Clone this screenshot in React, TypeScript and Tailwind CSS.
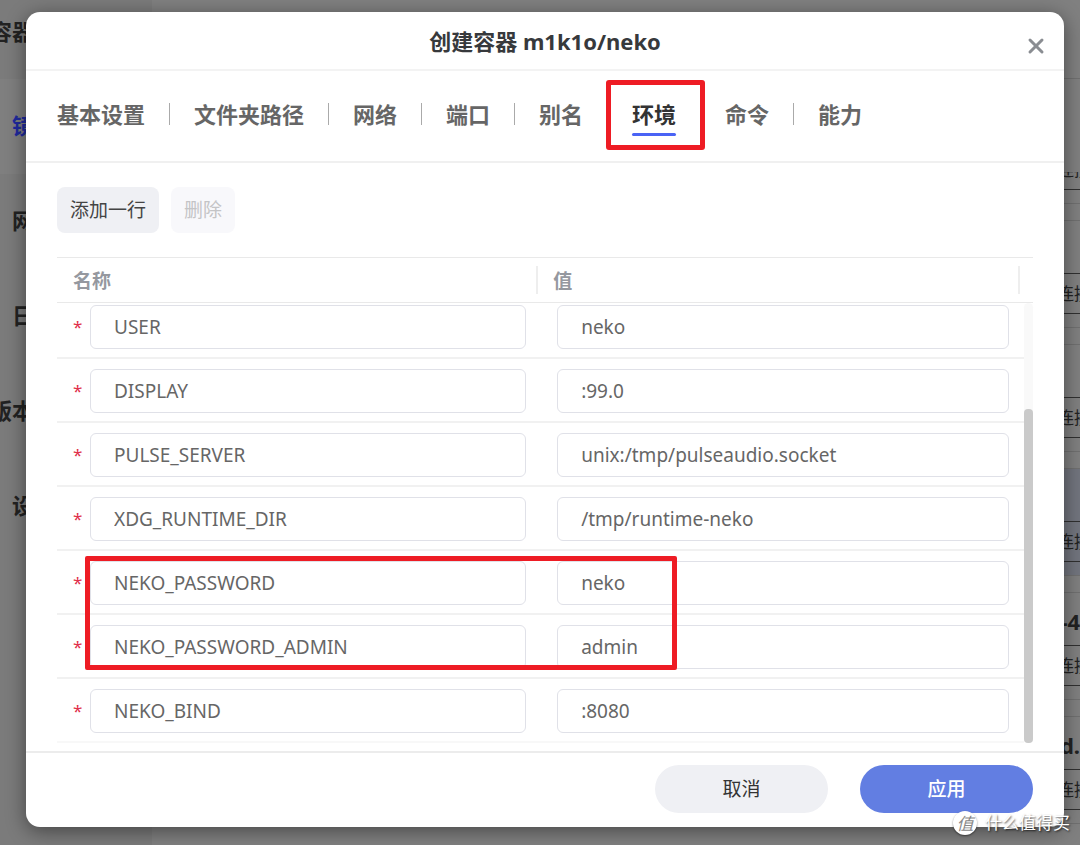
import { FC, useState } from 'react'
import { X } from 'lucide-react'
import clsx from 'clsx'

type Variable = { name: string; value: string }

const TABS = [
  '基本设置',
  '文件夹路径',
  '网络',
  '端口',
  '别名',
  '环境',
  '命令',
  '能力',
]

const VARIABLES: Variable[] = [
  { name: 'USER', value: 'neko' },
  { name: 'DISPLAY', value: ':99.0' },
  { name: 'PULSE_SERVER', value: 'unix:/tmp/pulseaudio.socket' },
  { name: 'XDG_RUNTIME_DIR', value: '/tmp/runtime-neko' },
  { name: 'NEKO_PASSWORD', value: 'neko' },
  { name: 'NEKO_PASSWORD_ADMIN', value: 'admin' },
  { name: 'NEKO_BIND', value: ':8080' },
]

const MENU = ['容器', '镜', '网', '日', '版本', '设']

const CARDS = [
  { title: '' },
  { title: '' },
  { title: '', selected: true },
  { title: '-4' },
  { title: 'd.' },
]

const Card: FC<{ title: string; selected?: boolean }> = ({
  title,
  selected,
}) => (
  <div
    className={clsx(
      'flex h-27 shrink-0 flex-col items-start border-y border-[#707070]',
      selected && 'bg-[#72757e]',
    )}
  >
    <div className="flex h-13 w-6 items-center justify-end whitespace-nowrap pt-1 text-[22px] font-bold text-[#222]">
      {title}
    </div>
    <button
      type="button"
      className="h-[41px] w-12 shrink-0 whitespace-nowrap border border-[#303030] text-left text-[17px] text-[#222]"
    >
      连接
    </button>
  </div>
)

const Backdrop: FC = () => (
  <div className="absolute inset-0 flex overflow-hidden bg-[#808080]" aria-hidden>
    <nav className="w-38 shrink-0 bg-[#7b7b7b]">
      {MENU.map((label) => (
        <div
          key={label}
          className={clsx(
            'flex h-[95px] items-center pb-0.5 text-[22px] font-bold first:h-[79px] first:pb-4',
            label === '镜' ? 'bg-[#7f7f7f] text-[#1f2a9c]' : 'text-[#222]',
          )}
        >
          <span className="flex w-[34px] justify-end whitespace-nowrap">
            {label}
          </span>
        </div>
      ))}
    </nav>
    <div className="flex flex-1 flex-col">
      <div className="h-[79px] shrink-0 border-b border-[#707070]" />
      <div className="ml-auto flex w-6 flex-col gap-4 pt-[93px]">
        <div className="flex h-8 shrink-0 flex-col justify-end overflow-hidden">
          <Card title="" />
        </div>
        {CARDS.map((card, index) => (
          <Card key={index} {...card} />
        ))}
      </div>
    </div>
  </div>
)

const Tabs: FC<{ active: string; onChange: (tab: string) => void }> = ({
  active,
  onChange,
}) => (
  <div
    role="tablist"
    className="flex h-[92px] items-center border-b-2 border-[#f0f0f0] px-[31px]"
  >
    {TABS.map((tab, index) => (
      <div key={tab} className="flex items-center pb-1">
        {index > 0 && <span className="mx-6 h-[22px] w-px bg-[#aaa]" />}
        <button
          type="button"
          role="tab"
          aria-selected={tab === active}
          onClick={() => onChange(tab)}
          className={clsx(
            'relative h-11 whitespace-nowrap text-[22px] font-bold',
            tab === active ? 'text-[#333]' : 'text-[#666]',
          )}
        >
          {tab}
          {tab === active && (
            <span className="absolute inset-x-0 bottom-0 h-[3px] rounded-full bg-[#4a63f5]" />
          )}
          {tab === '环境' && (
            <span className="pointer-events-none absolute -left-[26px] -top-3 z-10 h-[70px] w-[99px] rounded-[3px] border-5 border-[#ee1c24]" />
          )}
        </button>
      </div>
    ))}
  </div>
)

const FIELD =
  'h-11 w-full rounded-md border border-[#e0e1e8] bg-white px-[23px] text-[19px] text-[#666] outline-none'

const VariableTable: FC = () => (
  <div className="relative mt-6">
    <table className="w-full table-fixed border-separate border-spacing-0">
      <thead>
        <tr className="h-[46px] text-left text-[19px] font-bold text-[#95989f]">
          <th className="w-[49.3%] border-y border-[#e9e9e9] p-0">
            <div className="flex h-7 items-center border-r-2 border-[#eee] pl-4 pt-0.5">
              名称
            </div>
          </th>
          <th className="border-y border-[#e9e9e9] p-0">
            <div className="mr-1 flex h-7 items-center border-r-2 border-[#eee] pl-[15px] pt-0.5">
              值
            </div>
          </th>
          <th className="w-[9px] border-y border-[#e9e9e9] p-0" />
        </tr>
      </thead>
      <tbody>
        {VARIABLES.map(({ name, value }) => (
          <tr key={name} className="group">
            <td className="border-b-2 border-[#f1f1f1] pb-2 pl-4 pr-3 pt-2.5 group-first:pt-0.5 group-last:border-[#f8f8f8]">
              <div className="flex items-center">
                <span className="w-[17px] shrink-0 text-[17px] text-[#e0304a]">
                  *
                </span>
                <input
                  aria-label="名称"
                  defaultValue={name}
                  className={FIELD}
                />
              </div>
            </td>
            <td className="border-b-2 border-[#f1f1f1] pb-2 pl-[19px] pr-[15px] pt-2.5 group-first:pt-0.5 group-last:border-[#f8f8f8]">
              <div className="flex">
                <input
                  aria-label={`${name} 值`}
                  defaultValue={value}
                  className={FIELD}
                />
              </div>
            </td>
          </tr>
        ))}
      </tbody>
    </table>

    <div className="absolute bottom-0 right-0 top-[46px] flex w-[9px] flex-col justify-end rounded-full bg-[#f9f9f9]">
      <div className="h-[76%] rounded bg-[#cacaca]" />
    </div>
    <div className="pointer-events-none absolute left-7 top-[299px] h-[114px] w-[592px] rounded-[2px] border-5 border-[#ee1c24]" />
  </div>
)

const Watermark: FC = () => (
  <div className="pointer-events-none absolute bottom-2.5 right-2.5 flex items-center gap-2 text-white">
    <span className="flex size-6 items-center justify-center rounded-full bg-white text-[17px] italic leading-none text-[#888] shadow-[0_1px_2px_rgba(0,0,0,0.5)]">
      值
    </span>
    <span className="text-[17px] leading-6 [text-shadow:1px_1px_2px_rgba(0,0,0,0.7)]">
      什么值得买
    </span>
  </div>
)

export default function App() {
  const [active, setActive] = useState('环境')

  return (
    <div
      lang="zh-CN"
      className="relative min-h-screen overflow-hidden font-['Noto_Sans','Noto_Sans_CJK_SC',sans-serif]"
    >
      <Backdrop />

      <div className="relative pb-[18px] pl-[26px] pr-4 pt-3">
        <div
          role="dialog"
          aria-labelledby="dialog-title"
          className="rounded-[14px] bg-white shadow-[0_4px_20px_rgba(0,0,0,0.45)]"
        >
          <header className="relative flex h-[59px] items-center justify-center border-b-2 border-[#f3f3f3] pt-0.5">
            <h1
              id="dialog-title"
              className="text-[22px] font-bold text-[#37393c]"
            >
              创建容器 m1k1o/neko
            </h1>
            <button
              type="button"
              aria-label="关闭"
              className="absolute right-4 top-[22px] text-[#8a8d92]"
            >
              <X size={24} strokeWidth={3} />
            </button>
          </header>

          <Tabs active={active} onChange={setActive} />

          <section className="px-[31px] pb-2 pt-6">
            <div className="flex gap-3">
              <button
                type="button"
                className="h-[46px] rounded-lg bg-[#eff0f4] px-[13px] text-[19px] text-[#444]"
              >
                添加一行
              </button>
              <button
                type="button"
                disabled
                className="h-[46px] rounded-lg bg-[#f8f8fb] px-[13px] text-[19px] text-[#c4c4c6]"
              >
                删除
              </button>
            </div>

            <VariableTable />
          </section>

          <footer className="flex h-19 items-center justify-end gap-8 border-t-2 border-[#ececec] px-[31px] pb-0.5">
            <button
              type="button"
              className="h-12 w-[173px] rounded-full bg-[#eff0f4] text-[19px] text-[#333]"
            >
              取消
            </button>
            <button
              type="button"
              className="h-12 w-[173px] rounded-full bg-[#627ee2] text-[19px] font-medium text-white"
            >
              应用
            </button>
          </footer>
        </div>
      </div>

      <Watermark />
    </div>
  )
}
